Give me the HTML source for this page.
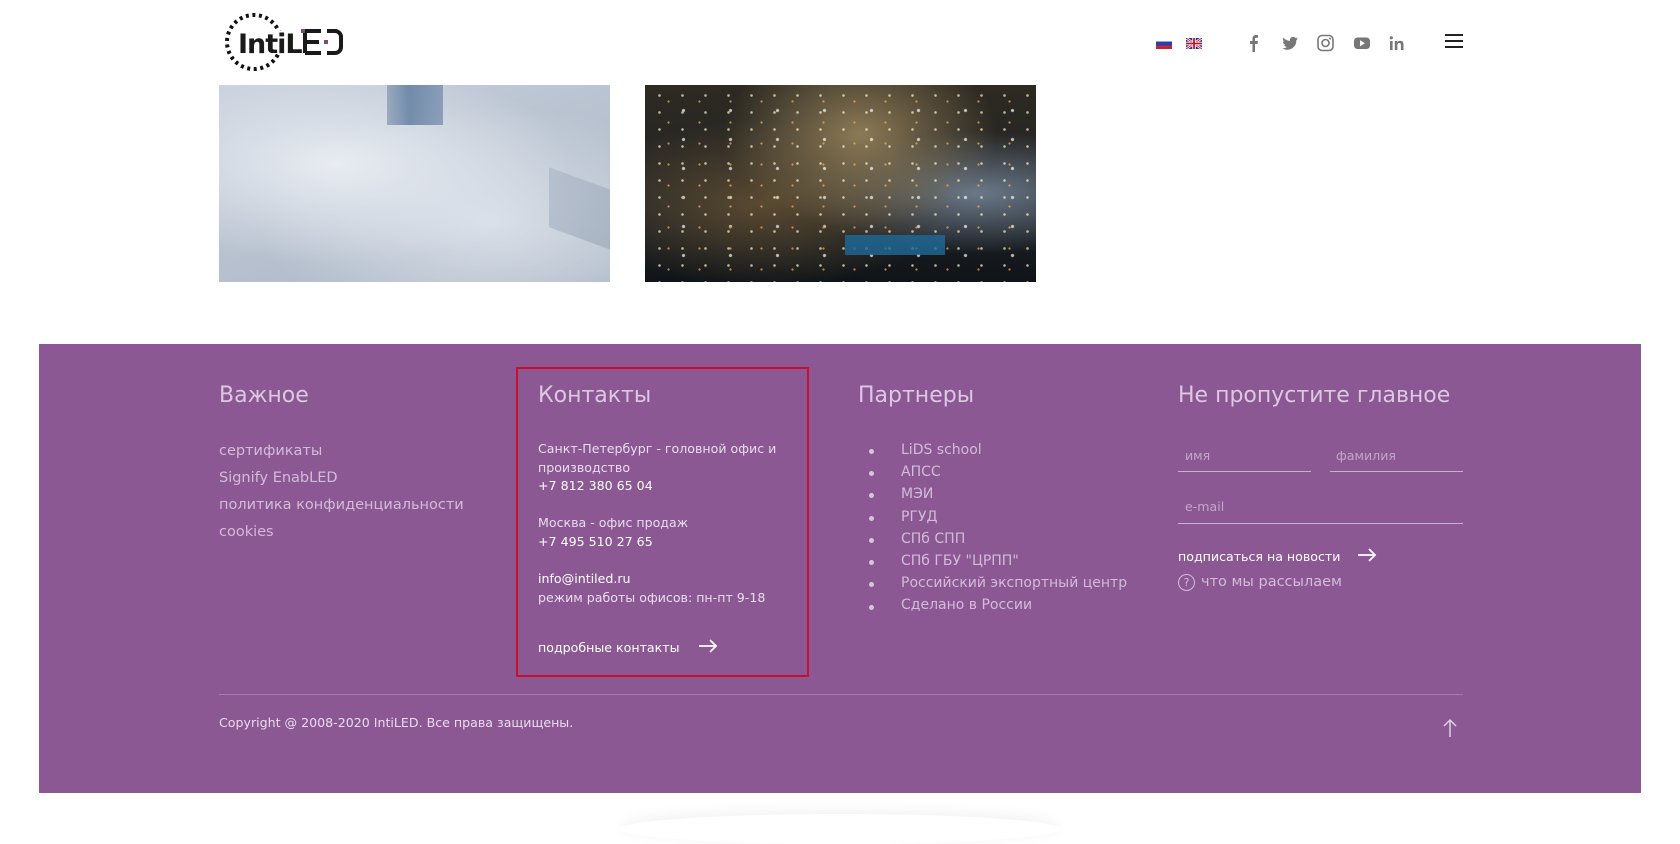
<!DOCTYPE html>
<html><head><meta charset="utf-8"><style>
*{margin:0;padding:0;box-sizing:border-box}
body{width:1680px;height:821px;background:#fff;position:relative;overflow:hidden;font-family:"DejaVu Sans","Liberation Sans",sans-serif}
.a{position:absolute;white-space:nowrap}
.footer{position:absolute;left:39px;top:344px;width:1602px;height:449px;background:#8b5894}
h2{position:absolute;font-weight:normal;font-size:22px;color:#dcc8e0;top:383px}
.lk{font-size:14.5px;color:#d2bcd7}
.ct{font-size:12.6px;color:#eadcee}
.w{color:#fff}
.pl{font-size:14px;color:#d2bcd7}
.dot{position:absolute;width:5px;height:5px;border-radius:50%;background:#d8c4dc}
.ul{position:absolute;height:1px;background:#c9b0ce}
.ph{font-size:12.6px;color:#c2a6c8}
</style></head><body>
<svg class="a" style="left:225px;top:11px" width="120" height="62" viewBox="0 0 120 62">
<g fill="none" stroke="#111" stroke-width="4" stroke-dasharray="3 3.6"><circle cx="29" cy="31" r="27"/></g>
<rect x="48" y="20" width="22" height="22" fill="#fff"/>
<text x="13" y="42" font-family="DejaVu Sans" font-weight="bold" font-size="27" fill="#1a1a1a" letter-spacing="-1">IntiL</text>
<path d="M80 20h16M80 31h14M80 42h16M80 20v22M102 20h8a6 6 0 0 1 6 6v10a6 6 0 0 1 -6 6h-8" stroke="#1a1a1a" stroke-width="4" fill="none"/>
<rect x="99" y="29" width="4" height="4" fill="#7a4a86"/>
<rect x="76" y="18" width="4" height="4" fill="#7a4a86"/>
</svg>
<div class="a" style="left:1156px;top:38px;width:16px;height:11px;background:linear-gradient(#fff 33%,#2140b4 33%,#2140b4 66%,#d21f2b 66%)"></div>
<svg class="a" style="left:1186px;top:38px" width="16" height="11" viewBox="0 0 16 11"><rect width="16" height="11" fill="#1f3a8a"/><path d="M0 0L16 11M16 0L0 11" stroke="#fff" stroke-width="2.4"/><path d="M0 0L16 11M16 0L0 11" stroke="#c8102e" stroke-width="0.9"/><path d="M8 0v11M0 5.5h16" stroke="#fff" stroke-width="3.4"/><path d="M8 0v11M0 5.5h16" stroke="#c8102e" stroke-width="1.8"/></svg>
<svg class="a" style="left:1246px;top:34px" width="170" height="18" viewBox="0 0 170 18" fill="#777">
<path d="M9 18V10h2.5l.4-3H9V5.2c0-.8.3-1.4 1.4-1.4H12V1.1C11.6 1 10.8 1 10 1 7.8 1 6.5 2.3 6.5 4.7V7H4v3h2.5v8z"/>
<path d="M52 4.5a6 6 0 0 1-1.9.5 3.2 3.2 0 0 0 1.4-1.800 6.3 6.3 0 0 1-2 .8 3.2 3.2 0 0 0-5.5 2.9A9 9 0 0 1 37.4 3.6a3.2 3.2 0 0 0 1 4.3 3 3 0 0 1-1.5-.4 3.2 3.2 0 0 0 2.6 3.1 3 3 0 0 1-1.4.1 3.2 3.2 0 0 0 3 2.2 6.4 6.4 0 0 1-4.7 1.3 9 9 0 0 0 13.9-8z"/>
<rect x="72" y="1.5" width="15" height="15" rx="4" fill="none" stroke="#777" stroke-width="1.6"/><circle cx="79.5" cy="9" r="3.5" fill="none" stroke="#777" stroke-width="1.6"/><circle cx="84" cy="4.6" r="1"/>
<rect x="108" y="3.5" width="16" height="11.5" rx="3.5"/><path d="M114 6.3v6l5-3z" fill="#fff"/>
<rect x="144" y="7" width="2.6" height="9"/><circle cx="145.3" cy="3.8" r="1.6"/><path d="M148.8 7h2.5v1.3c.6-1 1.7-1.6 3-1.6 2.4 0 3.2 1.5 3.2 3.9V16h-2.6v-4.8c0-1.2-.3-2.2-1.600-2.2s-1.9 1-1.9 2.3V16h-2.6z"/>
</svg>
<div class="a" style="left:1445px;top:34px;width:18px;height:2px;background:#222"></div>
<div class="a" style="left:1445px;top:40px;width:18px;height:2px;background:#222"></div>
<div class="a" style="left:1445px;top:46px;width:18px;height:2px;background:#222"></div>
<div class="a" style="left:219px;top:85px;width:391px;height:197px;background:radial-gradient(ellipse at 30% 40%,#e8ecf2,transparent 60%),radial-gradient(ellipse at 70% 70%,#d9dfe8,transparent 60%),linear-gradient(160deg,#c8d0dc,#b5bfcd 60%,#a9b4c3);overflow:hidden">
<div style="position:absolute;left:168px;top:0;width:56px;height:40px;background:linear-gradient(90deg,#8396b0,#4c6d95 40%,#6f88a8);opacity:.7"></div>
<div style="position:absolute;left:330px;top:95px;width:70px;height:60px;background:linear-gradient(135deg,#98a6b8,#7f8fa5);opacity:.4;transform:skewY(20deg)"></div>
</div>
<div class="a" style="left:645px;top:85px;width:391px;height:197px;background:radial-gradient(ellipse at 55% 25%,#8c7a55,transparent 45%),radial-gradient(ellipse at 30% 60%,#5a4a30,transparent 50%),radial-gradient(ellipse at 85% 55%,#6a7888,transparent 40%),linear-gradient(180deg,#2e2a22,#1f2226 60%,#101418);overflow:hidden">
<div style="position:absolute;inset:0;background-image:radial-gradient(circle,#fff2c8 1px,transparent 1.6px),radial-gradient(circle,#ffb050 0.8px,transparent 1.4px),radial-gradient(circle,#ffffff 1.2px,transparent 2px);background-size:23px 17px,31px 21px,47px 29px;background-position:3px 2px,8px 6px,15px 11px;opacity:.7"></div>
<div style="position:absolute;left:200px;top:150px;width:100px;height:20px;background:#1f6a9a;opacity:.8"></div>
</div>
<div class="footer"></div>
<h2 style="left:219px">Важное</h2>
<h2 style="left:538px">Контакты</h2>
<h2 style="left:858px">Партнеры</h2>
<h2 style="left:1178px">Не пропустите главное</h2>
<div class="a lk" style="left:219px;top:443px">сертификаты</div>
<div class="a lk" style="left:219px;top:470px">Signify EnabLED</div>
<div class="a lk" style="left:219px;top:497px">политика конфиденциальности</div>
<div class="a lk" style="left:219px;top:524px">cookies</div>
<div class="a" style="left:516px;top:367px;width:293px;height:310px;border:2px solid #c8102e"></div>
<div class="a ct" style="left:538px;top:441px">Санкт-Петербург - головной офис и</div>
<div class="a ct" style="left:538px;top:460px">производство</div>
<div class="a ct w" style="left:538px;top:478px">+7 812 380 65 04</div>
<div class="a ct" style="left:538px;top:515px">Москва - офис продаж</div>
<div class="a ct w" style="left:538px;top:534px">+7 495 510 27 65</div>
<div class="a ct w" style="left:538px;top:571px">info@intiled.ru</div>
<div class="a ct" style="left:538px;top:590px">режим работы офисов: пн-пт 9-18</div>
<div class="a ct w" style="left:538px;top:640px">подробные контакты</div>
<svg class="a" style="left:698px;top:638px" width="20" height="16" viewBox="0 0 20 16"><path d="M1 8h17M12 2l6 6-6 6" stroke="#fff" stroke-width="1.8" fill="none"/></svg>
<div class="a" style="left:858px;top:439px;line-height:22.2px">
<div class="pl" style="padding-left:43px">LiDS school</div>
<div class="pl" style="padding-left:43px">АПСС</div>
<div class="pl" style="padding-left:43px">МЭИ</div>
<div class="pl" style="padding-left:43px">РГУД</div>
<div class="pl" style="padding-left:43px">СПб СПП</div>
<div class="pl" style="padding-left:43px">СПб ГБУ "ЦРПП"</div>
<div class="pl" style="padding-left:43px">Российский экспортный центр</div>
<div class="pl" style="padding-left:43px">Сделано в России</div>
</div>
<div class="dot" style="left:869px;top:449px"></div><div class="dot" style="left:869px;top:471px"></div><div class="dot" style="left:869px;top:493px"></div><div class="dot" style="left:869px;top:516px"></div><div class="dot" style="left:869px;top:538px"></div><div class="dot" style="left:869px;top:560px"></div><div class="dot" style="left:869px;top:582px"></div><div class="dot" style="left:869px;top:605px"></div>
<div class="a ph" style="left:1185px;top:448px">имя</div>
<div class="a ph" style="left:1336px;top:448px">фамилия</div>
<div class="ul" style="left:1178px;top:471px;width:133px"></div>
<div class="ul" style="left:1330px;top:471px;width:133px"></div>
<div class="a ph" style="left:1185px;top:499px">e-mail</div>
<div class="ul" style="left:1178px;top:523px;width:285px"></div>
<div class="a ct w" style="left:1178px;top:549px">подписаться на новости</div>
<svg class="a" style="left:1357px;top:547px" width="20" height="16" viewBox="0 0 20 16"><path d="M1 8h17M12 2l6 6-6 6" stroke="#fff" stroke-width="1.8" fill="none"/></svg>
<div class="a" style="left:1178px;top:574px;width:17px;height:17px;border:1px solid #d2bcd7;border-radius:50%;font-size:11px;color:#d2bcd7;text-align:center;line-height:15px">?</div>
<div class="a pl" style="left:1201px;top:574px;font-size:14.5px">что мы рассылаем</div>
<div class="ul" style="left:219px;top:694px;width:1244px;background:#a57aac"></div>
<div class="a ct" style="left:219px;top:715px">Copyright @ 2008-2020 IntiLED. Все права защищены.</div>
<svg class="a" style="left:1442px;top:718px" width="16" height="20" viewBox="0 0 16 20"><path d="M8 19V2M2 8l6-6 6 6" stroke="#e0cfe4" stroke-width="1.5" fill="none"/></svg>
<div class="a" style="left:620px;top:814px;width:440px;height:30px;border-radius:50%;box-shadow:0 -3px 14px rgba(0,0,0,.06)"></div>
</body></html>
